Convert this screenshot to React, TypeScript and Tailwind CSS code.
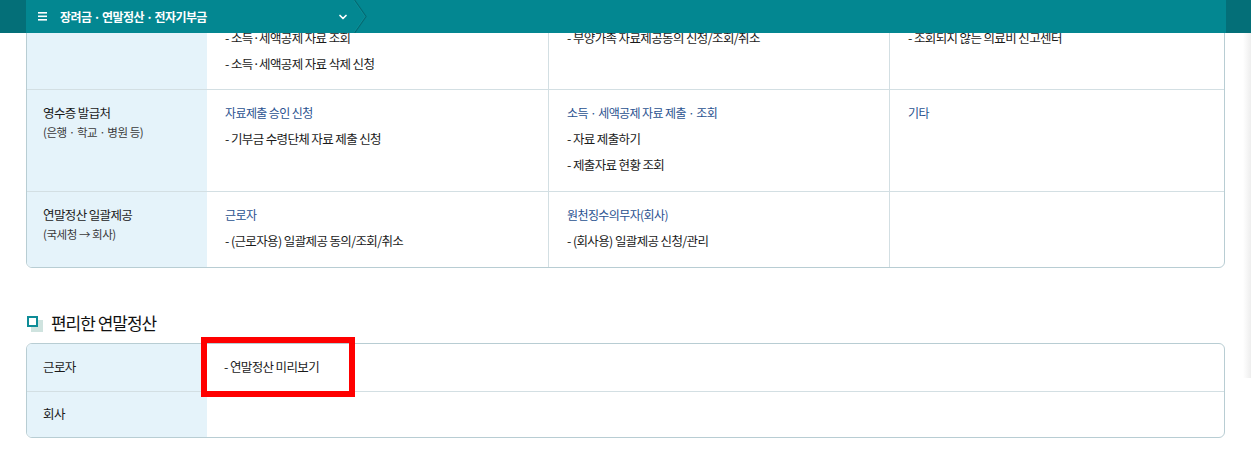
import { ChevronDown } from "lucide-react"

type Cell = { title?: string; items: string[] }
type Row = { id: string; label: string; sub?: string; cells: Cell[] }

const rows: Row[] = [
  {
    id: "r1",
    label: "",
    cells: [
      { title: "소득 · 세액공제 자료 조회", items: ["- 소득·세액공제 자료 조회", "- 소득·세액공제 자료 삭제 신청"] },
      { title: "부양가족 자료제공 동의", items: ["- 부양가족 자료제공동의 신청/조회/취소"] },
      { title: "의료비 신고센터", items: ["- 조회되지 않는 의료비 신고센터"] },
    ],
  },
  {
    id: "r2",
    label: "영수증 발급처",
    sub: "(은행 · 학교 · 병원 등)",
    cells: [
      { title: "자료제출 승인 신청", items: ["- 기부금 수령단체 자료 제출 신청"] },
      { title: "소득 · 세액공제 자료 제출 · 조회", items: ["- 자료 제출하기", "- 제출자료 현황 조회"] },
      { title: "기타", items: [] },
    ],
  },
  {
    id: "r3",
    label: "연말정산 일괄제공",
    sub: "(국세청 → 회사)",
    cells: [
      { title: "근로자", items: ["- (근로자용) 일괄제공 동의/조회/취소"] },
      { title: "원천징수의무자(회사)", items: ["- (회사용) 일괄제공 신청/관리"] },
      { items: [] },
    ],
  },
]

export default function App() {
  return (
    <div className="relative w-[1251px] h-[461px] overflow-hidden bg-white font-['Noto_Sans_CJK_KR','Noto_Sans',sans-serif] text-[#1a1a1a]">
      {/* sticky top bar */}
      <div className="absolute top-0 left-0 right-0 z-20 flex h-[33px]">
        <div className="w-[26px] bg-[#046f78]" />
        <div className="relative flex flex-1 items-center bg-[#038791] pl-[12px]">
          <svg width="10" height="9" viewBox="0 0 10 9" className="mr-[12px] shrink-0">
            <rect x="0" y="0" width="9" height="1.6" fill="#fff" />
            <rect x="0" y="3.5" width="9" height="1.6" fill="#fff" />
            <rect x="0" y="7" width="9" height="1.6" fill="#fff" />
          </svg>
          <span className="text-[12px] font-bold tracking-[-0.05em] text-white">장려금 · 연말정산 · 전자기부금</span>
          <ChevronDown className="absolute left-[311px] top-[11px] h-[12px] w-[12px] text-white" strokeWidth={3.5} />
          <svg width="14" height="33" viewBox="0 0 14 33" className="absolute left-[328px] top-0">
            <polyline points="0.5,0 12,16.5 0.5,33" fill="none" stroke="#056a72" strokeWidth="1.2" />
            <polyline points="-0.5,0 11,16.5 -0.5,33" fill="none" stroke="#1a9aa3" strokeWidth="0.8" opacity="0.6" />
          </svg>
        </div>
        <div className="w-[25px] bg-[#046f78]" />
      </div>

      {/* faint side shadow */}
      <div className="absolute right-0 top-[33px] z-10 h-[345px] w-[8px] bg-gradient-to-r from-transparent to-[#eeeeee]" />

      <div className="px-[26px]">
        {/* first table (scrolled under the bar) */}
        <div className="-mt-[12px] overflow-hidden rounded-[6px] border border-[#b8cdd3]">
          {rows.map((row, i) => (
            <div
              key={row.id}
              className={`grid grid-cols-[180px_341px_341px_1fr] ${i > 0 ? "border-t border-[#d3dfe3]" : ""}`}
            >
              <div className={`bg-[#e5f3fa] pl-[16px] pt-[10px] ${i === 0 ? "pb-[12px]" : "pb-[13px]"}`}>
                <p className="min-h-[26px] text-[12.5px] leading-[26px] tracking-[-0.05em]">{row.label}</p>
                {row.sub && <p className="text-[11.5px] leading-[12px] tracking-[-0.04em] text-[#3a3a3a]">{row.sub}</p>}
              </div>
              {row.cells.map((cell, j) => (
                <div
                  key={j}
                  className={`pl-[18px] pt-[10px] ${i === 0 ? "pb-[12px]" : "pb-[13px]"} ${j > 0 ? "border-l border-[#d3dfe3]" : ""}`}
                >
                  {cell.title && (
                    <p className="text-[12px] leading-[26px] tracking-[-0.05em] text-[#2a5290]">{cell.title}</p>
                  )}
                  {cell.items.map((it) => (
                    <p key={it} className="text-[12.5px] leading-[26px] tracking-[-0.05em]">
                      {it}
                    </p>
                  ))}
                </div>
              ))}
            </div>
          ))}
        </div>

        {/* section title */}
        <div className="mt-[43px] mb-[8px] flex items-center gap-[10px] pl-[1px]">
          <span className="relative block h-[14px] w-[14px]">
            <span className="absolute left-[4px] top-[4px] h-[12px] w-[12px] bg-[#cfe3df]" />
            <span className="absolute left-0 top-0 h-[11px] w-[11px] border-2 border-[#0e8c97] bg-white" />
          </span>
          <h2 className="text-[17px] leading-[24px] tracking-[-0.06em] text-[#111]">편리한 연말정산</h2>
        </div>

        {/* second table */}
        <div className="relative">
          <div className="overflow-hidden rounded-[6px] border border-[#b8cdd3]">
            <div className="grid h-[47px] grid-cols-[180px_1fr]">
              <div className="flex items-center bg-[#e5f3fa] pl-[16px] text-[12.5px] tracking-[-0.05em]">근로자</div>
              <div className="flex items-center pl-[17px] text-[12.5px] tracking-[-0.05em]">- 연말정산 미리보기</div>
            </div>
            <div className="grid h-[46px] grid-cols-[180px_1fr] border-t border-[#d3dfe3]">
              <div className="flex items-center bg-[#e5f3fa] pl-[16px] text-[12.5px] tracking-[-0.05em]">회사</div>
              <div />
            </div>
          </div>
          <div className="absolute left-[175px] top-[-6px] h-[60px] w-[154px] border-[6px] border-[#ff0000]" />
        </div>
      </div>
    </div>
  )
}
